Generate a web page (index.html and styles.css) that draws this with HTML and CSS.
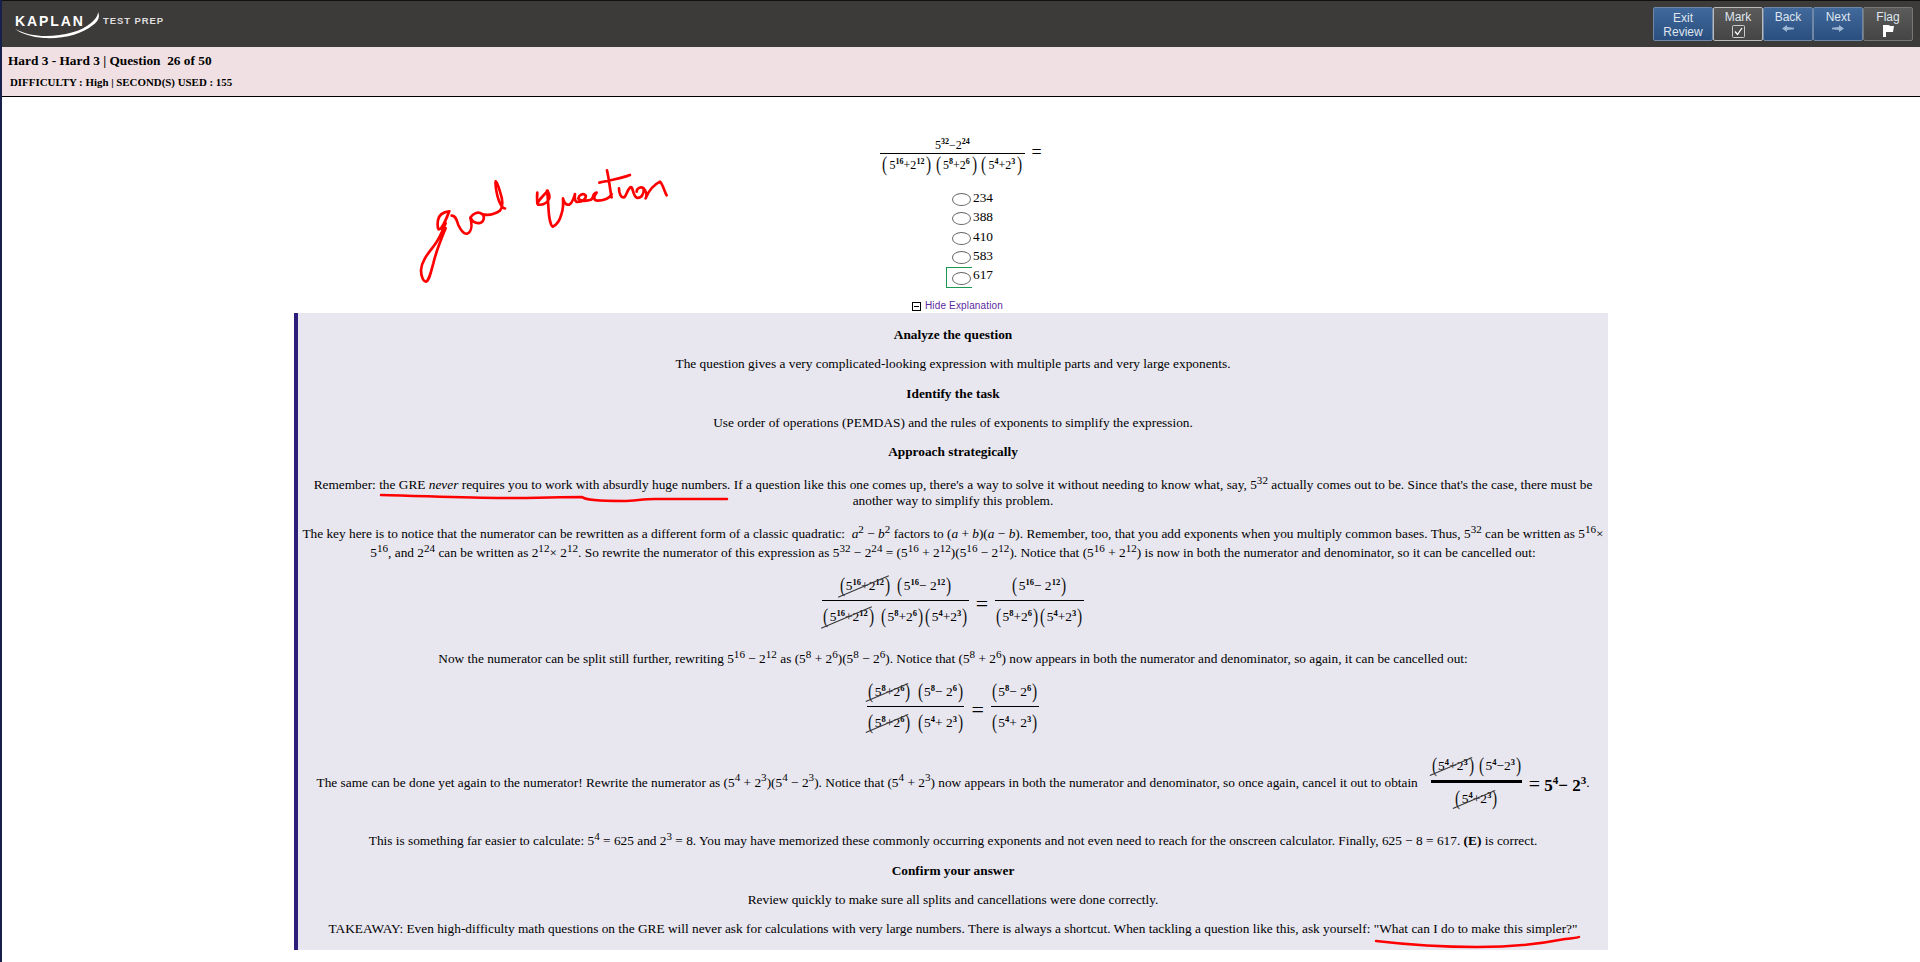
FILE: index.html
```html
<!DOCTYPE html>
<html lang="en">
<head>
<meta charset="utf-8">
<title>Kaplan Test Prep</title>
<link rel="stylesheet" href="styles.css">
</head>
<body>
<header class="topbar">
  <div class="logo">
    <span class="logo-word">KAPLAN</span>
    <svg class="logo-arc" width="88" height="30" viewBox="0 0 88 30"><path d="M1 18C12 23 20 25 32 25C50 25 68 20 77 12C82 8 84 4 84 1C86 5 85 10 79 14C68 23 50 28 30 27C18 26 8 23 1 18Z" fill="#fff"/></svg>
    <span class="logo-sub">TEST PREP</span>
  </div>
  <nav class="tools">
    <div class="tool blue wide"><span>Exit<br>Review</span></div>
    <div class="tool grey lit"><span>Mark</span><svg width="13" height="13" viewBox="0 0 13 13"><rect x=".5" y=".5" width="12" height="12" rx="1" fill="none" stroke="#ccc"/><path d="M3 6.5L5.5 9.5L10 3" fill="none" stroke="#fff" stroke-width="1.3"/></svg></div>
    <div class="tool blue"><span>Back</span><svg width="12" height="7" viewBox="0 0 12 7"><path d="M0 3.5L5 0V2L12 2.8V4.2L5 5V7Z" fill="#9db6d4"/></svg></div>
    <div class="tool blue"><span>Next</span><svg width="12" height="7" viewBox="0 0 12 7"><path d="M12 3.5L7 0V2L0 2.8V4.2L7 5V7Z" fill="#9db6d4"/></svg></div>
    <div class="tool grey"><span>Flag</span><svg width="11" height="12" viewBox="0 0 11 12"><path d="M0 0H6L7 1H11L10 7H3V12H1L0 12Z" fill="#fff"/></svg></div>
  </nav>
</header>
<section class="status">
  <div class="status-title">Hard 3 - Hard 3 | Question &nbsp;26 of 50</div>
  <div class="status-meta">DIFFICULTY : High | SECOND(S) USED : 155</div>
</section>
<main class="content">
  <div class="stem">
    <span class="frac frac-q">
      <span class="num">5<sup>32</sup>−2<sup>24</sup></span>
      <span class="den"><b class="p">(</b>5<sup>16</sup>+2<sup>12</sup><b class="p">)</b><b class="p">(</b>5<sup>8</sup>+2<sup>6</sup><b class="p">)</b><b class="p">(</b>5<sup>4</sup>+2<sup>3</sup><b class="p">)</b></span>
    </span>
    <span class="eq eq-q">=</span>
  </div>
  <ul class="choices">
    <li><i class="radio"></i>234</li>
    <li><i class="radio"></i>388</li>
    <li><i class="radio"></i>410</li>
    <li><i class="radio"></i>583</li>
    <li class="correct"><i class="radio"></i>617</li>
  </ul>
  <div class="toggle"><i class="minus"></i><span>Hide Explanation</span></div>
  <article class="explain">
    <p><strong>Analyze the question</strong></p>
    <p>The question gives a very complicated-looking expression with multiple parts and very large exponents.</p>
    <p><strong>Identify the task</strong></p>
    <p>Use order of operations (PEMDAS) and the rules of exponents to simplify the expression.</p>
    <p><strong>Approach strategically</strong></p>
    <p>Remember: the GRE <em>never</em> requires you to work with absurdly huge numbers. If a question like this one comes up, there's a way to solve it without needing to know what, say, 5<sup>32</sup> actually comes out to be. Since that's the case, there must be another way to simplify this problem.</p>
    <p>The key here is to notice that the numerator can be rewritten as a different form of a classic quadratic: &nbsp;<em>a</em><sup>2</sup> − <em>b</em><sup>2</sup> factors to (<em>a</em> + <em>b</em>)(<em>a</em> − <em>b</em>). Remember, too, that you add exponents when you multiply common bases. Thus, 5<sup>32</sup> can be written as 5<sup>16</sup>× 5<sup>16</sup>, and 2<sup>24</sup> can be written as 2<sup>12</sup>× 2<sup>12</sup>. So rewrite the numerator of this expression as 5<sup>32</sup> − 2<sup>24</sup> = (5<sup>16</sup> + 2<sup>12</sup>)(5<sup>16</sup> − 2<sup>12</sup>). Notice that (5<sup>16</sup> + 2<sup>12</sup>) is now in both the numerator and denominator, so it can be cancelled out:</p>
    <div class="display">
      <span class="frac">
        <span class="num"><span class="cancel"><b class="p">(</b>5<sup>16</sup>+2<sup>12</sup><b class="p">)</b></span><span class="gap"><b class="p">(</b>5<sup>16</sup>− 2<sup>12</sup><b class="p">)</b></span></span>
        <span class="den"><span class="cancel"><b class="p">(</b>5<sup>16</sup>+2<sup>12</sup><b class="p">)</b></span><span class="gap"><b class="p">(</b>5<sup>8</sup>+2<sup>6</sup><b class="p">)</b></span><b class="p">(</b>5<sup>4</sup>+2<sup>3</sup><b class="p">)</b></span>
      </span>
      <span class="eq">=</span>
      <span class="frac">
        <span class="num"><b class="p">(</b>5<sup>16</sup>− 2<sup>12</sup><b class="p">)</b></span>
        <span class="den"><b class="p">(</b>5<sup>8</sup>+2<sup>6</sup><b class="p">)</b><b class="p">(</b>5<sup>4</sup>+2<sup>3</sup><b class="p">)</b></span>
      </span>
    </div>
    <p>Now the numerator can be split still further, rewriting 5<sup>16</sup> − 2<sup>12</sup> as (5<sup>8</sup> + 2<sup>6</sup>)(5<sup>8</sup> − 2<sup>6</sup>). Notice that (5<sup>8</sup> + 2<sup>6</sup>) now appears in both the numerator and denominator, so again, it can be cancelled out:</p>
    <div class="display">
      <span class="frac">
        <span class="num"><span class="cancel"><b class="p">(</b>5<sup>8</sup>+2<sup>6</sup><b class="p">)</b></span><span class="gap"><b class="p">(</b>5<sup>8</sup>− 2<sup>6</sup><b class="p">)</b></span></span>
        <span class="den"><span class="cancel"><b class="p">(</b>5<sup>8</sup>+2<sup>6</sup><b class="p">)</b></span><span class="gap"><b class="p">(</b>5<sup>4</sup>+ 2<sup>3</sup><b class="p">)</b></span></span>
      </span>
      <span class="eq">=</span>
      <span class="frac">
        <span class="num"><b class="p">(</b>5<sup>8</sup>− 2<sup>6</sup><b class="p">)</b></span>
        <span class="den"><b class="p">(</b>5<sup>4</sup>+ 2<sup>3</sup><b class="p">)</b></span>
      </span>
    </div>
    <p>The same can be done yet again to the numerator! Rewrite the numerator as (5<sup>4</sup> + 2<sup>3</sup>)(5<sup>4</sup> − 2<sup>3</sup>). Notice that (5<sup>4</sup> + 2<sup>3</sup>) now appears in both the numerator and denominator, so once again, cancel it out to obtain &nbsp;
      <span class="frac frac-inline">
        <span class="num"><span class="cancel"><b class="p">(</b>5<sup>4</sup>+2<sup>3</sup><b class="p">)</b></span><span class="gap"><b class="p">(</b>5<sup>4</sup>−2<sup>3</sup><b class="p">)</b></span></span>
        <span class="den"><span class="cancel"><b class="p">(</b>5<sup>4</sup>+2<sup>3</sup><b class="p">)</b></span></span>
      </span>
      <span class="result"><span class="eq">=</span> 5<sup>4</sup>− 2<sup>3</sup></span>.</p>
    <p>This is something far easier to calculate: 5<sup>4</sup> = 625 and 2<sup>3</sup> = 8. You may have memorized these commonly occurring exponents and not even need to reach for the onscreen calculator. Finally, 625 − 8 = 617. <strong>(E)</strong> is correct.</p>
    <p><strong>Confirm your answer</strong></p>
    <p>Review quickly to make sure all splits and cancellations were done correctly.</p>
    <p>TAKEAWAY: Even high-difficulty math questions on the GRE will never ask for calculations with very large numbers. There is always a shortcut. When tackling a question like this, ask yourself: "What can I do to make this simpler?"</p>
  </article>
</main>
<svg class="ink" width="1920" height="962" viewBox="0 0 1920 962" fill="none" stroke="#f00" stroke-width="2" stroke-linecap="round" stroke-linejoin="round">
  <g transform="translate(415 170) scale(.3333)" stroke-width="8">
    <path d="M103 124C85 126 72 132 69 150C67 165 68 178 72 178C82 178 92 150 103 124M92 160C82 185 72 210 55 230C35 255 20 275 18 300C18 320 25 335 33 335C42 332 47 310 55 280C62 250 75 215 92 175M110 137C122 136 125 150 130 165C138 182 148 193 157 191C170 185 172 165 166 143C175 128 190 124 202 132C210 142 207 155 195 159C180 162 170 152 168 145M200 132C220 138 240 132 255 122C265 110 262 85 255 65C250 48 245 35 242 34C240 50 248 90 258 105C262 112 268 117 270 115"/>
    <path d="M398 62C388 75 375 85 367 100C366 85 366 75 367 68C366 85 366 100 369 104C385 106 398 98 403 85C405 75 400 65 396 62C400 90 400 125 403 142C405 155 410 170 413 170C425 165 435 150 440 130C445 115 445 100 444 85C447 97 452 106 462 104C472 100 476 85 480 72C478 85 480 96 488 96C503 96 515 85 512 76C505 68 492 74 490 85C495 95 512 93 525 90C538 88 530 70 545 68C535 80 535 92 548 92C565 92 585 85 590 72M576 1C582 25 585 60 590 82M553 38C580 32 620 25 645 15M612 55C612 70 618 85 628 82C635 75 635 62 646 52C655 48 652 75 665 83C680 86 688 70 686 55C678 48 665 55 665 65M690 60C695 70 695 80 692 85C700 65 715 45 735 35C745 45 748 65 755 76"/>
  </g>
  <path d="M381 495C425 496 465 498 504 498C535 498 560 497 582 497C585 500 600 501 623 501C635 501 642 499 655 499C680 499 705 499 727 499" stroke-width="2.5"/>
  <path d="M1376 941C1410 945 1445 947 1477 947C1510 947 1545 943 1565 939C1572 938 1577 938 1579 937" stroke-width="2.5"/>
</svg>
</body>
</html>
```
FILE: styles.css
```css
* { box-sizing: border-box; }
html, body { margin: 0; height: 962px; overflow: hidden; background: #fff; }
body { font-family: "Liberation Serif", "Times New Roman", serif; color: #000; border-left: 2px solid #17204c; position: relative; }
.topbar { height: 47px; background: #3d3a3a; border-top: 1px solid #111; display: flex; justify-content: space-between; align-items: flex-start; }
.logo { position: relative; width: 200px; height: 46px; color: #fff; font-family: "Liberation Sans", Arial, sans-serif; }
.logo-word { position: absolute; left: 13px; top: 12px; font-size: 14px; font-weight: 700; letter-spacing: 1.9px; line-height: 16px; }
.logo-sub { position: absolute; left: 101px; top: 14px; font-size: 9.5px; font-weight: 700; letter-spacing: .9px; line-height: 12px; color: #ddd; }
.logo-arc { position: absolute; left: 12px; top: 10px; }
.tools { display: flex; padding-top: 6px; padding-right: 7px; }
.tool { width: 50px; height: 34px; border: 1px solid #6f88a8; border-radius: 2px; display: flex; flex-direction: column; align-items: center; color: #dfe5ee; font: 12px/14px "Liberation Sans", Arial, sans-serif; text-align: center; padding-top: 2px; gap: 1px; }
.tool.wide { width: 60px; padding-top: 3px; }
.blue { background: linear-gradient(#41699b, #2a4f7f); }
.grey { background: linear-gradient(#5b5b5b, #454545); border-color: #777; }
.grey.lit { border-color: #bbb; }
.status { height: 50px; background: #f0e0e3; border-bottom: 1px solid #000; padding: 6px 0 0 6px; font-weight: 700; }
.status-title { font-size: 13.33px; line-height: 16px; }
.status-meta { font-size: 10.9px; line-height: 13px; margin: 7px 0 0 2px; }
.content { display: flex; flex-direction: column; align-items: center; padding-right: 20px; }
.stem { display: flex; align-items: center; justify-content: center; gap: 7px; margin-top: 41px; padding-left: 20px; }
.frac { display: inline-flex; flex-direction: column; align-items: stretch; text-align: center; font-size: 13.5px; line-height: 22px; vertical-align: middle; white-space: nowrap; }
.frac sup { font-size: 8.5px; line-height: 0; vertical-align: 5px; font-weight: 700; }
.num { display: block; padding-bottom: 3px; border-bottom: 1px solid #000; }
.den { display: block; padding: 5px 0 5px; }
.p { font-weight: 400; font-size: 22px; line-height: 20px; display: inline-block; vertical-align: -2px; transform: scaleX(.7); margin: 0; color: #111; }
.eq { font-size: 22px; line-height: 1; font-weight: 400; }
.frac-q { font-size: 12px; }
.frac-q .num { line-height: 15px; padding-bottom: 0; }
.frac-q .den { padding: 0; }
.frac-q .p { margin: 0 1px; }
.frac-q sup { font-size: 8px; }
.eq-q { font-size: 18px; position: relative; top: -5px; }
.choices { list-style: none; margin: 14px 0 0 43px; padding: 0; font-size: 13.33px; }
.choices li { height: 19.25px; display: flex; align-items: flex-start; line-height: 15px; position: relative; }
.radio { display: block; width: 19px; height: 13px; border: 1.5px solid #666; border-radius: 50%; margin: 3px 2px 0 0; }
.correct .radio { margin-top: 5px; }
.correct::before { content: ""; position: absolute; left: -6px; top: 0; width: 25px; height: 19px; border: 1.5px solid #1a9850; border-right: 0; }
.toggle { display: flex; align-items: center; gap: 4px; margin: 13px 0 0 13px; height: 14px; color: #5b2aa0; font: 10px/14px "Liberation Sans", Arial, sans-serif; letter-spacing: .15px; }
.minus { width: 9px; height: 9px; border: 1px solid #000; position: relative; display: block; }
.minus::after { content: ""; position: absolute; left: 1px; top: 3px; width: 5px; height: 1px; background: #000; }
.explain { width: 1314px; margin-top: 0; height: 637px; background: #e8e7f0; border-left: 4px solid #2b1f7a; padding: 14px 0 0; text-align: center; font-size: 13.33px; line-height: 15px; }
.explain p { margin: 0 0 14.2px; }
.display { display: flex; justify-content: center; align-items: center; gap: 7px; margin: 0 0 14.4px; }
.cancel { position: relative; display: inline-block; }
.cancel::after { content: ""; position: absolute; left: -3px; right: 1px; top: 50%; height: 1px; background: #333; transform: rotate(-23deg); }
.gap { margin-left: 5px; }
.frac-inline { margin: 0 3px; }
.frac-inline .gap { margin-left: 3px; }
.frac-inline .num { border-bottom-width: 3px; padding-top: 2px; }
.frac-inline .den { padding: 5px 0 4.5px; }
.result { font-size: 17px; font-weight: 700; vertical-align: middle; }
.result .eq { font-size: 20px; }
.result sup { font-size: 11px; }
.ink { position: absolute; left: -2px; top: 0; pointer-events: none; }
```
